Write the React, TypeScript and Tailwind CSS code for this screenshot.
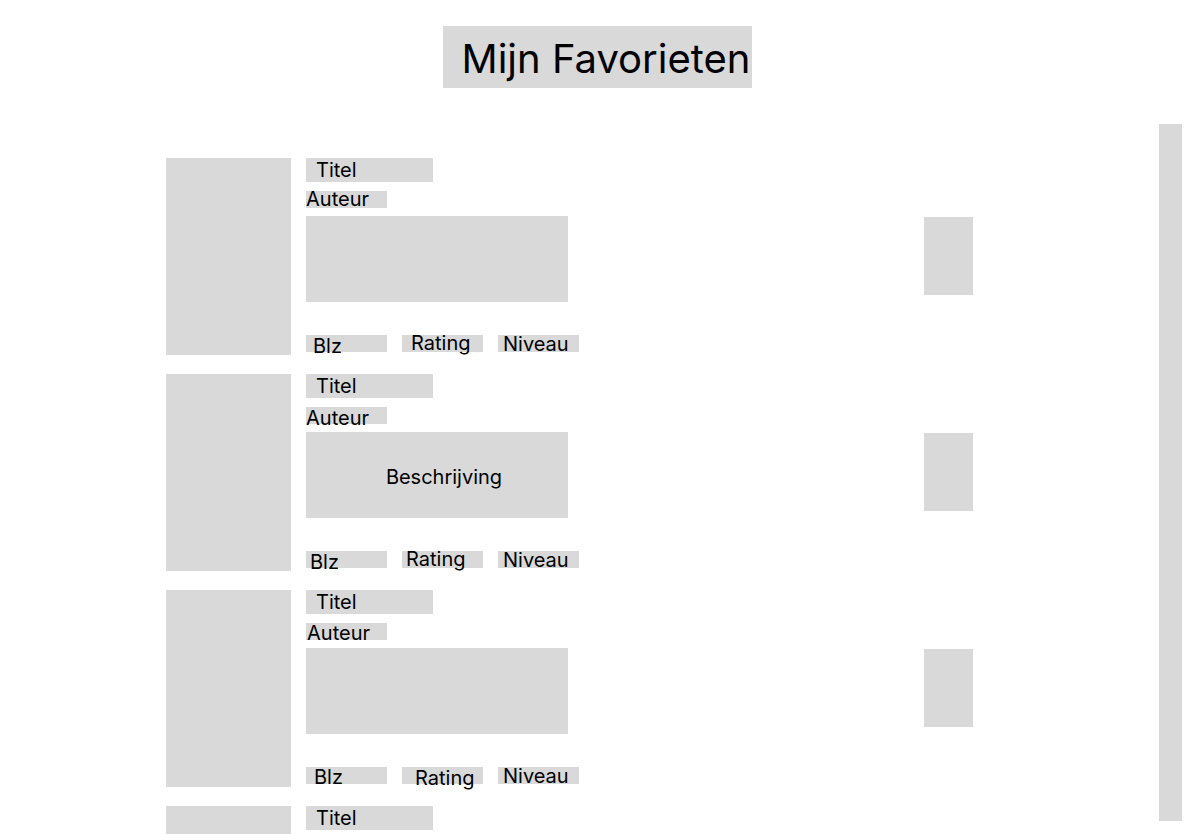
import React from "react";

type Card = {
  desc: string;
  auteurPad: string;
  blz: string;
  rating: string;
  niveau: string;
};

const cards: Card[] = [
  { desc: "", auteurPad: "pt-0 pl-0", blz: "pl-[7px] pt-[3px]", rating: "pl-[9px] pt-0", niveau: "pl-[5px] pt-[1px]" },
  { desc: "Beschrijving", auteurPad: "pt-[3px] pl-0", blz: "pl-[4px] pt-[3px]", rating: "pl-[4px] pt-0", niveau: "pl-[5px] pt-[1px]" },
  { desc: "", auteurPad: "pt-[2px] pl-[1px]", blz: "pl-[8px] pt-[2px]", rating: "pl-[13px] pt-[3px]", niveau: "pl-[5px] pt-[1px]" },
  { desc: "", auteurPad: "pt-0 pl-0", blz: "pl-[7px] pt-[3px]", rating: "pl-[9px] pt-0", niveau: "pl-[5px] pt-[1px]" },
];

function FavCard({ c }: { c: Card }) {
  return (
    <div className="flex h-[197px] w-[807px] shrink-0">
      <div className="h-[197px] w-[125px] shrink-0 bg-[#d9d9d9]" />
      <div className="ml-[15px] flex w-[273px] flex-col">
        <div className="h-[24px] w-[127px] bg-[#d9d9d9] pl-[10px] text-[20px] leading-[24px] text-black">
          Titel
        </div>
        <div className={"mt-[9px] h-[17px] w-[81px] bg-[#d9d9d9] text-[20px] leading-[17px] text-black whitespace-nowrap " + c.auteurPad}>
          Auteur
        </div>
        <div className="mt-[8px] flex h-[86px] w-[262px] items-center justify-center bg-[#d9d9d9] pl-[14px] pt-[4px] text-[20px] leading-[24px] text-black">
          {c.desc}
        </div>
        <div className="mt-[33px] flex gap-[15px]">
          <div className={"h-[17px] w-[81px] bg-[#d9d9d9] text-[20px] leading-[17px] text-black whitespace-nowrap " + c.blz}>Blz</div>
          <div className={"h-[17px] w-[81px] bg-[#d9d9d9] text-[20px] leading-[17px] text-black whitespace-nowrap " + c.rating}>Rating</div>
          <div className={"h-[17px] w-[81px] bg-[#d9d9d9] text-[20px] leading-[17px] text-black whitespace-nowrap " + c.niveau}>Niveau</div>
        </div>
      </div>
      <div className="ml-auto mt-[59px] h-[78px] w-[49px] bg-[#d9d9d9]" />
    </div>
  );
}

export default function App() {
  return (
    <div className="h-screen w-full overflow-hidden bg-white font-['Inter',sans-serif] text-black">
      <div className="flex justify-center pt-[26px]">
        <div className="h-[62px] w-[309px] whitespace-nowrap bg-[#d9d9d9] pl-[19px] pt-[2px] text-[40px] leading-[62px]">
          Mijn Favorieten
        </div>
      </div>
      <div className="mt-[36px] flex">
        <div className="flex flex-1 flex-col gap-[19px] pl-[166px] pt-[34px]">
          {cards.map((c, i) => (
            <FavCard key={i} c={c} />
          ))}
        </div>
        <div className="mr-[12px] h-[697px] w-[23px] shrink-0 bg-[#d9d9d9]" />
      </div>
    </div>
  );
}
